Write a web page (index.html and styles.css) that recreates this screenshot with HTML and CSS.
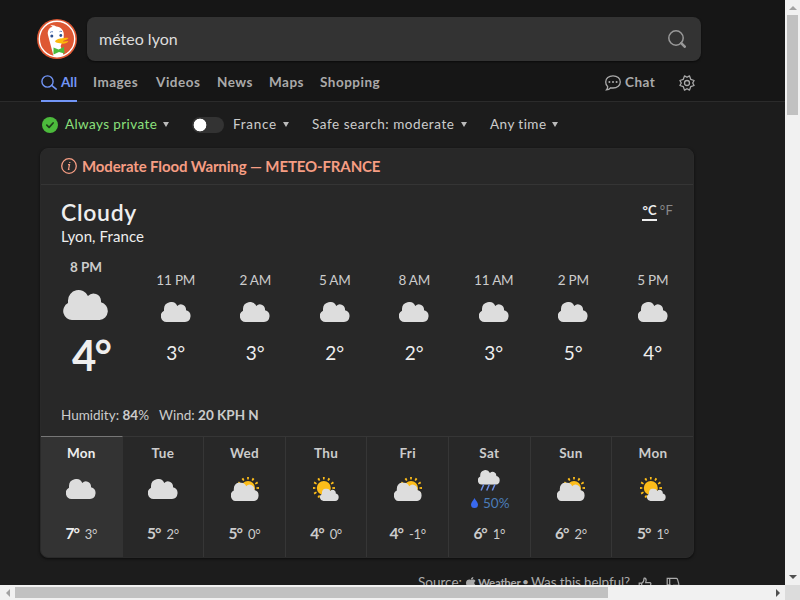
FILE: index.html
```html
<!DOCTYPE html>
<html lang="fr">
<head>
<meta charset="utf-8">
<title>méteo lyon at DuckDuckGo</title>
<link rel="stylesheet" href="styles.css">
</head>
<body>
<svg class="defs" width="0" height="0">
  <symbol id="cloud" viewBox="0 0 30 20"><path d="M6 20a6 6 0 0 1-3-11.3V7a7 7 0 0 1 13.3-3A5 5 0 0 1 25 7.1v1.1A6 6 0 0 1 24 20Z" fill="#ddd"/></symbol>
  <symbol id="sun" viewBox="0 0 24 24"><circle cx="12" cy="12" r="7" fill="#fdbd1a"/><circle cx="12" cy="12" r="9.8" fill="none" stroke="#fdbd1a" stroke-width="2.7" pathLength="48" stroke-dasharray="1.4 2.6" stroke-dashoffset=".7"/></symbol>
  <symbol id="cloudy-sun" viewBox="0 0 28 24"><use href="#sun" x="5" y="-1" width="24" height="24"/><use href="#cloud" x="0" y="5.4" width="28" height="18.7"/></symbol>
  <symbol id="sun-cloud" viewBox="0 0 26 24"><use href="#sun" x="-1.2" y="-1" width="24" height="24"/><use href="#cloud" x="7" y="11.4" width="19" height="12.6"/></symbol>
  <symbol id="rain" viewBox="0 0 22 21"><use href="#cloud" width="22" height="14.7"/><path d="m5.7 14.5-2.6 6m8.2-6-2.6 6m8.2-6-2.6 6" stroke="#6b8eea" stroke-width="1.5"/></symbol>
  <symbol id="thumb" viewBox="0 0 14 14"><path d="M1.2 6.2h2.5v6.500H1.200Zm2.500 0C5.600 5.300 6 3.500 6 1.500c0-.8 2.200-.7 2.200 1.500l-.5 2.700h4.200c1 0 1.100 1 .8 1.800l-1.200 4.200c-.2.700-.6 1-1.300 1H3.700" fill="none" stroke="#aaa" stroke-width="1.200"/></symbol>
</svg>
<div class="window">
  <div class="page">
    <header class="header">
      <div class="searchrow">
        <svg class="logo" viewBox="0 0 40 40"><circle cx="20" cy="20" r="20" fill="#de5833"/><path d="M16.500 37C14.500 29 12.500 22 11 16c-.9-4 1-7.500 4.500-8.300-1-.5-1.300-.8-2.300-.9 2-.9 4.300-.5 6 .7 4.800.6 7.300 3.500 7.600 7.500l-.2 5-3 7 3 9.200c-3.400 1.300-6.700 1.500-10.100.8Z" fill="#fff"/><circle cx="20" cy="20" r="17.700" fill="none" stroke="#fff" stroke-width="1.400"/><circle cx="14.800" cy="17" r="1.500" fill="#2d4f8e"/><circle cx="23.800" cy="16.500" r="1.400" fill="#2d4f8e"/><path d="M13 13.500q1.500-1.200 3-.7m6.500-.1q1.300-.8 2.500-.1" stroke="#5276b5" stroke-width=".9" fill="none"/><path d="M18 22.500c1.500-2.700 4.500-2.700 7.200-3.200 2-.5 4-.9 6.300-.2-1.400 1.800-4 2.300-6 3.100 2 .6 4.200.2 5.900-.2-1 2.600-5.500 3.200-8.400 2.300-2-.5-4.300-.5-5-1.800Z" fill="#fdb90a"/><path d="m16.500 28.500 5 2 5.500-2.500.5 6.500-5.500-1.500-5.500 2.500Z" fill="#4cba3c"/></svg>
        <div class="searchbox"><span class="query">méteo lyon</span>
          <svg class="glass" viewBox="0 0 18 18"><circle cx="8" cy="8" r="7.200" fill="none" stroke="#999" stroke-width="1.500"/><path d="m13.200 13.200 3.500 3.500" stroke="#999" stroke-width="2.600" stroke-linecap="round"/></svg>
        </div>
      </div>
      <nav class="tabs">
        <a class="tab active"><svg width="17" height="15" viewBox="0 0 17 15"><circle cx="6.500" cy="6.500" r="5.600" fill="none" stroke="#7295f6" stroke-width="1.400"/><path d="m10.600 10.400 4.600 3.700" stroke="#7295f6" stroke-width="1.600" stroke-linecap="round"/></svg><span>All</span></a>
        <a class="tab images">Images</a><a class="tab videos">Videos</a><a class="tab news">News</a><a class="tab maps">Maps</a><a class="tab shopping">Shopping</a>
        <a class="tab chat"><svg width="16" height="16" viewBox="0 0 16 16"><path d="M8 .8c4.300 0 7.300 2.700 7.300 6.100S12.300 13 8 13c-.8 0-1.600-.1-2.300-.2-1.300 1.500-2.700 2.100-4.300 2.100.9-1 1.400-2.200 1.200-3.500C1.400 10.300.7 8.700.7 6.900.7 3.500 3.700.8 8 .8Z" fill="none" stroke="#aaa" stroke-width="1.300"/><path d="M4.400 7h.01M8 7h.01M11.600 7h.01" stroke="#aaa" stroke-width="2" stroke-linecap="round"/></svg><span>Chat</span></a>
        <svg class="gear" width="16" height="16" viewBox="0 0 16 16"><path d="M5.500.9 8 2.300 10.500.9l1.200 3.400 3.400 1.200L13.700 8l1.400 2.500-3.400 1.200-1.200 3.400L8 13.700l-2.500 1.400-1.200-3.400L.9 10.500 2.300 8 .9 5.500l3.400-1.200Z" fill="none" stroke="#aaa" stroke-width="1.300" stroke-linejoin="round"/><circle cx="8" cy="8" r="2.500" fill="none" stroke="#aaa" stroke-width="1.300"/></svg>
      </nav>
    </header>
    <div class="filters">
      <svg class="check" width="16" height="16" viewBox="0 0 16 16"><circle cx="8" cy="8" r="8" fill="#4cba3c"/><path d="m4.800 8.200 2.300 2.200 4-4.400" fill="none" stroke="#1c3d19" stroke-width="1.700" stroke-linecap="round" stroke-linejoin="round"/></svg>
      <span class="filter private">Always private</span><i class="caret"></i>
      <span class="toggle"></span>
      <span class="filter france">France</span><i class="caret"></i>
      <span class="filter safe">Safe search: moderate</span><i class="caret"></i>
      <span class="filter time">Any time</span><i class="caret"></i>
    </div>
    <main class="card">
      <div class="alert"><svg width="16" height="16" viewBox="0 0 16 16"><circle cx="8" cy="8" r="7.300" fill="none" stroke="#f69d83" stroke-width="1.300"/><path d="M7 6.700h1.500l-1 4.600h1M8.800 4.100v.9" fill="none" stroke="#f69d83" stroke-width="1.200"/></svg><span>Moderate Flood Warning — METEO-FRANCE</span></div>
      <section class="now">
        <div class="place"><h1>Cloudy</h1><p>Lyon, France</p></div>
        <div class="units"><b>°C</b><span>°F</span></div>
      </section>
      <section class="hours">
        <div class="hour current"><span>8 PM</span><svg><use href="#cloud"/></svg><strong>4°</strong></div>
        <div class="hour"><span>11 PM</span><svg><use href="#cloud"/></svg><strong>3°</strong></div>
        <div class="hour"><span>2 AM</span><svg><use href="#cloud"/></svg><strong>3°</strong></div>
        <div class="hour"><span>5 AM</span><svg><use href="#cloud"/></svg><strong>2°</strong></div>
        <div class="hour"><span>8 AM</span><svg><use href="#cloud"/></svg><strong>2°</strong></div>
        <div class="hour"><span>11 AM</span><svg><use href="#cloud"/></svg><strong>3°</strong></div>
        <div class="hour"><span>2 PM</span><svg><use href="#cloud"/></svg><strong>5°</strong></div>
        <div class="hour"><span>5 PM</span><svg><use href="#cloud"/></svg><strong>4°</strong></div>
      </section>
      <div class="details"><span class="humidity">Humidity: <b>84</b>%</span><span class="wind">Wind: <b>20 KPH N</b></span></div>
      <section class="days">
        <div class="day selected"><h2>Mon</h2><div class="icon"><svg width="30" height="20"><use href="#cloud"/></svg></div><p><b>7°</b><span>3°</span></p></div>
        <div class="day"><h2>Tue</h2><div class="icon"><svg width="30" height="20"><use href="#cloud"/></svg></div><p><b>5°</b><span>2°</span></p></div>
        <div class="day"><h2>Wed</h2><div class="icon part"><svg width="28" height="24"><use href="#cloudy-sun"/></svg></div><p><b>5°</b><span>0°</span></p></div>
        <div class="day"><h2>Thu</h2><div class="icon"><svg width="26" height="24"><use href="#sun-cloud"/></svg></div><p><b>4°</b><span>0°</span></p></div>
        <div class="day"><h2>Fri</h2><div class="icon"><svg width="28" height="24"><use href="#cloudy-sun"/></svg></div><p><b>4°</b><span>-1°</span></p></div>
        <div class="day"><h2>Sat</h2><div class="icon wet"><svg width="22" height="21"><use href="#rain"/></svg><div class="chance"><svg width="7" height="10" viewBox="0 0 7 10"><path d="M3.500 0C4.500 2.300 7 4.300 7 6.500a3.500 3.500 0 0 1-7 0C0 4.300 2.500 2.300 3.500 0Z" fill="#3969ef"/></svg><span>50%</span></div></div><p><b>6°</b><span>1°</span></p></div>
        <div class="day"><h2>Sun</h2><div class="icon"><svg width="28" height="24"><use href="#cloudy-sun"/></svg></div><p><b>6°</b><span>2°</span></p></div>
        <div class="day"><h2>Mon</h2><div class="icon"><svg width="26" height="24"><use href="#sun-cloud"/></svg></div><p><b>5°</b><span>1°</span></p></div>
      </section>
    </main>
    <footer class="source">
      <span class="label">Source:</span>
      <svg class="apple" width="10" height="11" viewBox="0 0 10 11"><path d="M5 3C6 2.300 8.500 2 9.500 4 7.500 5.300 8 7.500 10 8.300 9 11 7.700 11.500 6 10.700c-.8-.3-1.200-.3-2 0C2 11.500 0 8.500 0 6c0-3.200 3-4 5-3ZM5 2.500C4.800 1 6 .1 7.300 0 7.400 1.500 6.300 2.500 5 2.500Z" fill="#aaa"/></svg>
      <span class="weather">Weather</span><span class="dot">•</span><span class="helpful">Was this helpful?</span>
      <svg class="thumb" width="14" height="14"><use href="#thumb"/></svg><svg class="thumb down" width="14" height="14"><use href="#thumb"/></svg>
    </footer>
  </div>
  <div class="vbar"><i class="up"></i><div class="thumbbar"></div><i class="down-arrow"></i></div>
  <div class="hbar"><i class="left"></i><div class="thumbbar"></div><i class="right"></i></div>
  <div class="corner"></div>
</div>
</body>
</html>
```

FILE: styles.css
```css
* { box-sizing: border-box; }
body { margin: 0; background: #1c1c1c; color: #ccc; font: 14px/20px Lato, "Liberation Sans", sans-serif; overflow: hidden; }
h1, h2, p { margin: 0; font-weight: normal; }
svg { display: block; flex: none; }
.defs { position: absolute; }
.window { display: grid; grid-template: 585px 15px / 785px 15px; width: 800px; height: 600px; }
.page { overflow: hidden; }

.header { height: 102px; padding: 17px 0 0 37px; background: #161616; border-bottom: 1px solid #2b2b2b; }
.searchrow { display: flex; gap: 10px; height: 44px; align-items: center; }
.logo { width: 40px; height: 40px; }
.searchbox { display: flex; align-items: center; justify-content: space-between; width: 614px; height: 44px; padding: 0 15px 0 12px; background: #333; border-radius: 8px; box-shadow: 0 1px 2px #0008; }
.query { margin-top: -1px; font-size: 16px; color: #ddd; }
.glass { width: 18px; height: 18px; }
.tabs { display: flex; align-items: center; width: 659px; height: 41px; margin-left: 4px; }
.tab { flex: none; height: 41px; line-height: 42px; font-size: 13.500px; font-weight: bold; color: #aaa; white-space: nowrap; letter-spacing: .5px; }
.active { display: flex; align-items: center; gap: 3px; width: 36px; margin-right: 16px; color: #7295f6; border-bottom: 2px solid #7295f6; letter-spacing: 0; }
.active svg { position: relative; top: 2px; }
.active span { position: relative; top: 1px; }
.images { width: 63px; }
.videos { width: 61px; }
.news { width: 52px; }
.maps { width: 51px; }
.chat { display: flex; align-items: center; gap: 4px; margin-left: auto; width: 51px; }
.chat svg, .gear { position: relative; top: 1px; }
.gear { margin-left: 23px; margin-right: 5px; }

.filters { display: flex; align-items: center; height: 46px; padding: 0 0 1px 42px; }
.filter { margin-top: -1px; white-space: nowrap; color: #ccc; font-size: 13.500px; line-height: 20px; letter-spacing: .45px; }
.check, .toggle, .filter, .caret { flex: none; }
.private { width: 98px; margin-left: 7px; letter-spacing: .4px; color: #8be07d; }
.caret { border: 3.500px solid transparent; border-top: 5px solid #bbb; border-bottom: 0; }
.toggle { width: 32px; height: 16px; margin-left: 23px; border-radius: 8px; background: radial-gradient(circle at 8px 8px, #fff 6px, transparent 6.700px) #333; }
.france { width: 50px; margin-left: 9px; letter-spacing: .7px; }
.safe { width: 149px; margin-left: 23px; letter-spacing: .55px; }
.time { width: 62px; margin-left: 23px; }

.card { width: 654px; height: 410px; margin-left: 40px; background: #282828; border: 1px solid #2a2a2a; border-radius: 8px; box-shadow: 0 1px 3px #0009; overflow: hidden; }
.alert { display: flex; align-items: center; gap: 5px; height: 36px; padding: 0 20px 1px; border-bottom: 1px solid #353535; color: #f69d83; font-size: 15px; font-weight: bold; letter-spacing: -.13px; }
.alert span { margin-top: -1px; }
.now { display: flex; justify-content: space-between; height: 72px; padding: 15px 20px 0; }
.place h1 { font-size: 23px; line-height: 25px; font-weight: 600; color: #eee; letter-spacing: .7px; }
.place p { font-size: 15px; line-height: 23px; color: #eee; letter-spacing: .1px; }
.units { display: flex; gap: 3px; font-size: 13px; line-height: 20px; letter-spacing: .2px; color: #888; }
.units b { height: 21px; border-bottom: 2px solid #eee; color: #eee; }

.hours { display: grid; grid-template-columns: 95px repeat(7, 79.500px); height: 141px; }
.hour { display: flex; flex-direction: column; align-items: center; padding-top: 12px; }
.hour span { font-size: 13.500px; line-height: 20px; color: #ccc; white-space: nowrap; }
.hour svg { width: 30px; height: 20px; margin-top: 13px; }
.hour strong { margin-top: 18px; font-size: 19px; line-height: 26px; font-weight: normal; color: #eee; }
.hour:not(.current) span { padding-top: 1px; margin-bottom: -1px; letter-spacing: -.2px; }
.current { padding: 0 5px 0 0; }
.current span { font-weight: bold; }
.current svg { width: 46px; height: 30px; margin-top: 13px; }
.current strong { margin: 10px 0 0 10px; font-size: 42px; line-height: 50px; font-weight: bold; letter-spacing: -2px; }
.details { display: flex; height: 38px; padding: 7px 20px 0; white-space: nowrap; font-size: 13.500px; }
.humidity { width: 98px; }

.days { display: grid; grid-template-columns: repeat(8, 81.600px); height: 121px; }
.day { border-top: 1px solid #363636; border-right: 1px solid #363636; text-align: center; }
.day:last-child { border-right: 0; }
.selected { background: #333; border-top-color: #777; border-right-color: #333; }
.day h2 { margin-top: 6px; font-size: 13.500px; line-height: 20px; font-weight: bold; letter-spacing: .3px; }
.selected h2, .selected b { color: #eee; }
.icon { display: flex; flex-direction: column; align-items: center; justify-content: center; height: 52px; }
.part { padding-left: 1px; }
.wet { justify-content: flex-start; padding-top: 7px; }
.chance { display: flex; align-items: center; gap: 5px; margin: 3px 0 0 2px; font-size: 13.500px; color: #4b7db9; }
.chance span { line-height: 18px; }
.day p { display: flex; justify-content: center; gap: 6px; margin-top: 8px; line-height: 20px; }
.day b { font-size: 15.500px; letter-spacing: -1px; }
.day p span { padding-top: 1px; font-size: 13px; letter-spacing: -.3px; }

.source { display: flex; height: 27px; padding: 14px 0 0 418px; color: #aaa; font-size: 13.500px; line-height: 20px; white-space: nowrap; }
.source .label { width: 48px; }
.apple { margin-top: 5px; }
.weather { width: 44px; margin-left: 2px; font-size: 11.500px; line-height: 21px; font-weight: bold; letter-spacing: -.3px; }
.dot { width: 9px; font-size: 12px; }
.helpful { width: 107px; letter-spacing: -.12px; }
.thumb { margin: 5px 14px 0 0; }
.down { transform: scaleY(-1); }

.vbar, .hbar { background: #f1f1f1; display: flex; align-items: center; }
.vbar { flex-direction: column; }
.vbar .thumbbar { width: 11px; height: 100px; margin-top: 5px; background: #c1c1c1; }
.hbar .thumbbar { width: 593px; height: 11px; margin-left: 5px; background: #c1c1c1; }
.corner { background: #dcdcdc; }
.up, .down-arrow, .left, .right { border: 4px solid transparent; }
.up { margin-top: 6px; border-top: 0; border-bottom-color: #a3a3a3; }
.down-arrow { margin: auto 0 6px; border-bottom: 0; border-top-color: #505050; }
.left { margin-left: 6px; border-left: 0; border-right-color: #a3a3a3; }
.right { margin: 0 5px 0 auto; border-right: 0; border-left-color: #505050; }
```
